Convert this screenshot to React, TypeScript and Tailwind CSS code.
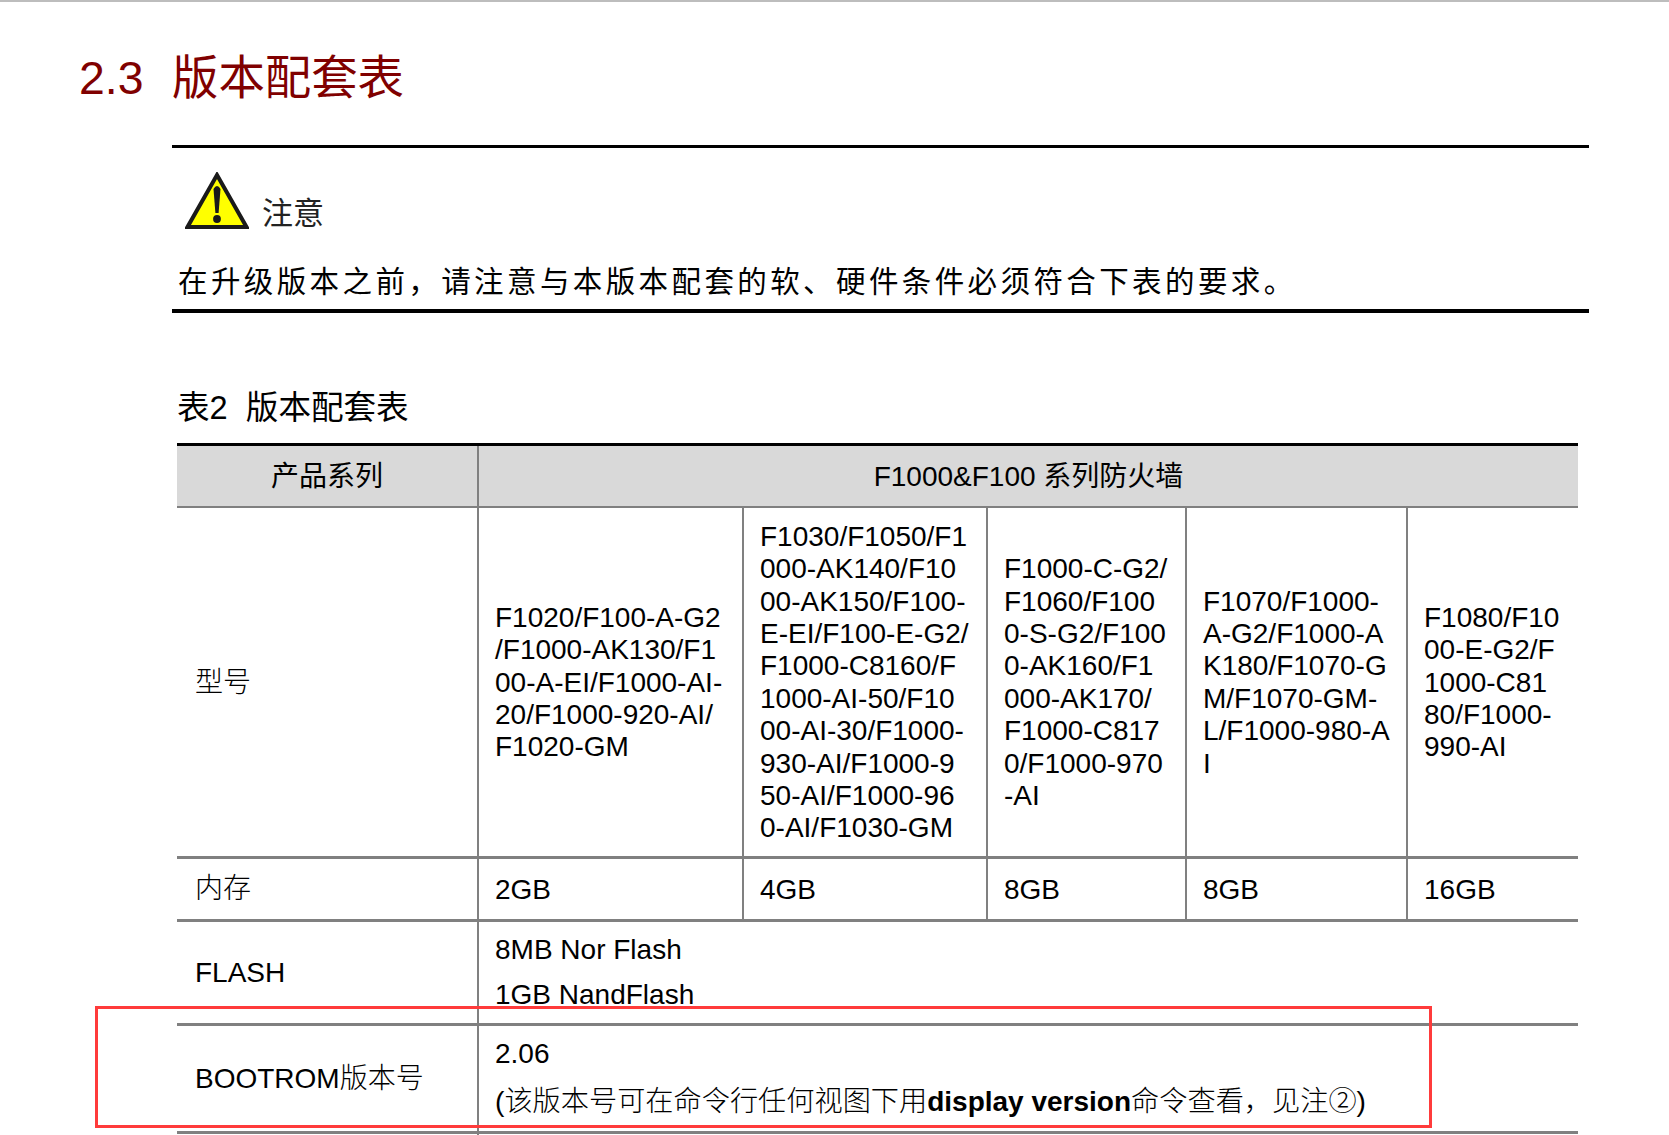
const sans = "font-['Liberation_Sans','Noto_Sans_CJK_SC',sans-serif]";

const WarningIcon = () => (
  <svg width="64" height="57" viewBox="0 0 64 57" className="shrink-0">
    <path d="M32 3 L61.5 55 L2.5 55 Z" fill="#ffff00" stroke="#1a1a1a" strokeWidth="4" />
    <path d="M28.5 17 Q32 11 35.5 17 L33.6 41 L30.4 41 Z" fill="#1a1a1a" />
    <circle cx="32" cy="47" r="3.9" fill="#1a1a1a" />
  </svg>
);

const ModelCell = ({ lines, last }: { lines: string[]; last?: boolean }) => (
  <td className={`pl-4 pt-[2px] align-middle leading-[32.4px] whitespace-nowrap ${last ? "" : "border-r-2 border-[#808080]"}`}>
    {lines.map((line) => (
      <div key={line}>{line}</div>
    ))}
  </td>
);

const MemoryCell = ({ value, last }: { value: string; last?: boolean }) => (
  <td className={`pl-4 pt-[1px] align-middle ${last ? "" : "border-r-2 border-[#808080]"}`}>{value}</td>
);

export default function App() {
  return (
    <div className={`h-[1135px] overflow-hidden bg-white border-t-2 border-[#bdbdbd] text-black ${sans}`}>
      <h1 className="flex pl-[79px] pt-[46px] h-[143px] text-[46.4px] leading-[60px] font-normal text-[#800000]">
        <span className="w-[93px]">2.3</span>
        <span>版本配套表</span>
      </h1>

      <div className="ml-[172px] w-[1417px] h-[168px] border-t-[3px] border-b-4 border-black">
        <div className="flex items-end pl-[13px] pt-6">
          <WarningIcon />
          <span className="ml-[13px] mb-[-3px] text-[31px] leading-[36px] text-[#222]">注意</span>
        </div>
        <p className="pl-[6px] mt-[35px] text-[29.5px] leading-[36px] tracking-[3.4px]">
          在升级版本之前，请注意与本版本配套的软、硬件条件必须符合下表的要求。
        </p>
      </div>

      <div className="ml-[5px]">
        <h2 className="ml-[172px] mt-[75px] h-[55px] text-[32.6px] leading-[40px] font-normal">表2&nbsp;&nbsp;版本配套表</h2>
        <table className="ml-[172px] w-[1401px] table-fixed border-collapse text-[28px] leading-[34px]">
          <colgroup>
            <col className="w-[301px]" />
            <col className="w-[265px]" />
            <col className="w-[244px]" />
            <col className="w-[199px]" />
            <col className="w-[221px]" />
            <col className="w-[171px]" />
          </colgroup>
          <thead>
            <tr className="h-[62px] bg-[#d9d9d9] border-t-[3px] border-t-black border-b-2 border-b-[#808080]">
              <th className="pt-[3px] font-normal border-r-2 border-[#808080]">产品系列</th>
              <th colSpan={5} className="pt-[3px] font-normal">F1000&amp;F100 系列防火墙</th>
            </tr>
          </thead>
          <tbody>
            <tr className="h-[351px] border-b-[3px] border-[#808080]">
              <td className="pl-[18px] pt-[3px] border-r-2 border-[#808080] font-light">型号</td>
              <ModelCell lines={["F1020/F100-A-G2", "/F1000-AK130/F1", "00-A-EI/F1000-AI-", "20/F1000-920-AI/", "F1020-GM"]} />
              <ModelCell lines={["F1030/F1050/F1", "000-AK140/F10", "00-AK150/F100-", "E-EI/F100-E-G2/", "F1000-C8160/F", "1000-AI-50/F10", "00-AI-30/F1000-", "930-AI/F1000-9", "50-AI/F1000-96", "0-AI/F1030-GM"]} />
              <ModelCell lines={["F1000-C-G2/", "F1060/F100", "0-S-G2/F100", "0-AK160/F1", "000-AK170/", "F1000-C817", "0/F1000-970", "-AI"]} />
              <ModelCell lines={["F1070/F1000-", "A-G2/F1000-A", "K180/F1070-G", "M/F1070-GM-", "L/F1000-980-A", "I"]} />
              <ModelCell last lines={["F1080/F10", "00-E-G2/F", "1000-C81", "80/F1000-", "990-AI"]} />
            </tr>
            <tr className="h-[63px] border-b-[3px] border-[#808080]">
              <td className="pl-[18px] border-r-2 border-[#808080] font-light">内存</td>
              <MemoryCell value="2GB" />
              <MemoryCell value="4GB" />
              <MemoryCell value="8GB" />
              <MemoryCell value="8GB" />
              <MemoryCell last value="16GB" />
            </tr>
            <tr className="h-[104px] border-b-[3px] border-[#808080]">
              <td className="pl-[18px] border-r-2 border-[#808080]">FLASH</td>
              <td colSpan={5} className="pl-4">
                <div className="flex flex-col gap-[11px]">
                  <span>8MB Nor Flash</span>
                  <span>1GB NandFlash</span>
                </div>
              </td>
            </tr>
            <tr className="h-[108px] border-b-[3px] border-[#808080]">
              <td className="pl-[18px] border-r-2 border-[#808080]">
                BOOTROM<span className="font-light">版本号</span>
              </td>
              <td colSpan={5} className="pl-4 pb-[2px]">
                <div className="flex flex-col gap-[13px]">
                  <span>2.06</span>
                  <span className="font-light text-[28.2px]">
                    (该版本号可在命令行任何视图下用<b className="font-bold text-[28px]">display version</b>命令查看，见注②)
                  </span>
                </div>
              </td>
            </tr>
            <tr className="h-[10px]">
              <td className="border-r-2 border-[#808080]"></td>
              <td colSpan={5}></td>
            </tr>
          </tbody>
        </table>
      </div>

      <div className="absolute left-[95px] top-[1006px] w-[1337px] h-[122px] border-[3px] border-[#ff3b3b] pointer-events-none"></div>
    </div>
  );
}
